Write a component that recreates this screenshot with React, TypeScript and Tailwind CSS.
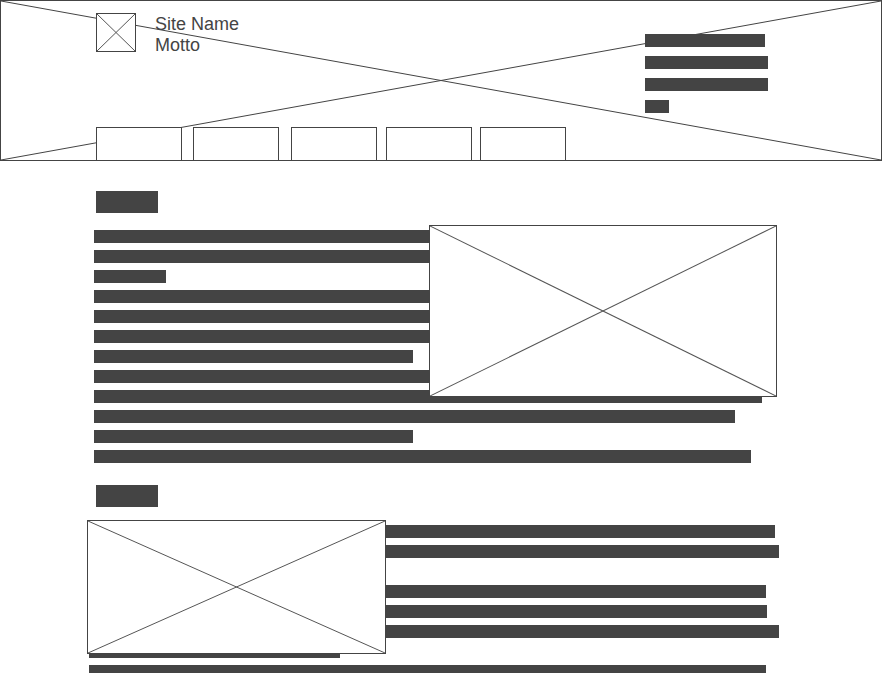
import React from "react";

function Cross({ color = "#555555" }: { color?: string }) {
  return (
    <svg className="absolute inset-0 h-full w-full" preserveAspectRatio="none" viewBox="0 0 100 100">
      <line x1="0" y1="0" x2="100" y2="100" stroke={color} strokeWidth="1" vectorEffect="non-scaling-stroke" />
      <line x1="0" y1="100" x2="100" y2="0" stroke={color} strokeWidth="1" vectorEffect="non-scaling-stroke" />
    </svg>
  );
}

// image placeholder box with an X; position class is passed in by the caller
function Placeholder({ className }: { className: string }) {
  return (
    <div className={`box-border border border-[#444444] bg-white ${className}`}>
      <Cross />
    </div>
  );
}

function Bar({ className }: { className: string }) {
  return <div className={`h-[13px] shrink-0 bg-[#444444] ${className}`} />;
}

function Header() {
  return (
    <header className="relative box-border flex h-[161px] w-[882px] flex-col border border-[#444444]">
      <Cross color="#444444" />
      <div className="relative flex pl-[95px] pt-[12px]">
        <div className="flex w-[549px] items-start">
          <Placeholder className="relative h-[39px] w-[40px]" />
          <div className="mt-[1px] ml-[19px] text-[18px] leading-[21px] text-[#444444] [font-family:'Liberation_Sans',Arial,sans-serif]">
            <div>Site Name</div>
            <div>Motto</div>
          </div>
        </div>
        <div className="mt-[21px] flex flex-col gap-[9px]">
          <Bar className="w-[120px]" />
          <Bar className="w-[123px]" />
          <Bar className="w-[123px]" />
          <Bar className="w-[24px]" />
        </div>
      </div>
      <nav className="relative mt-auto flex pl-[95px]">
        <div className="box-border h-[33px] w-[86px] border-x border-t border-[#444444] bg-white" />
        <div className="ml-[11px] box-border h-[33px] w-[86px] border-x border-t border-[#444444] bg-white" />
        <div className="ml-[12px] box-border h-[33px] w-[86px] border-x border-t border-[#444444] bg-white" />
        <div className="ml-[9px] box-border h-[33px] w-[86px] border-x border-t border-[#444444] bg-white" />
        <div className="ml-[8px] box-border h-[33px] w-[86px] border-x border-t border-[#444444] bg-white" />
      </nav>
    </header>
  );
}

function SectionOne() {
  return (
    <section className="mt-[30px] ml-[94px]">
      <div className="ml-[2px] h-[22px] w-[62px] bg-[#444444]" />
      <div className="relative mt-[17px] flex flex-col gap-[7px]">
        <Bar className="w-[620px]" />
        <Bar className="w-[640px]" />
        <Bar className="w-[72px]" />
        <Bar className="w-[610px]" />
        <Bar className="w-[630px]" />
        <Bar className="w-[600px]" />
        <Bar className="w-[319px]" />
        <Bar className="w-[650px]" />
        <Bar className="w-[668px]" />
        <Bar className="w-[641px]" />
        <Bar className="w-[319px]" />
        <Bar className="w-[657px]" />
        <Placeholder className="absolute top-[-5px] left-[335px] h-[172px] w-[348px]" />
      </div>
    </section>
  );
}

function SectionTwo() {
  return (
    <section className="mt-[22px] ml-[89px] pb-[17px]">
      <div className="ml-[7px] h-[22px] w-[62px] bg-[#444444]" />
      <div className="relative mt-[18px] flex flex-col gap-[7px]">
        <Bar className="w-[686px]" />
        <Bar className="w-[690px]" />
        <div className="h-[13px]" />
        <Bar className="w-[677px]" />
        <Bar className="w-[678px]" />
        <Bar className="w-[690px]" />
        <Bar className="w-[251px]" />
        <div className="h-[8px] w-[677px] bg-[#444444]" />
        <Placeholder className="absolute top-[-5px] left-[-2px] h-[134px] w-[299px]" />
      </div>
    </section>
  );
}

export default function App() {
  return (
    <div className="min-h-[690px] w-[884px] bg-white">
      <Header />
      <SectionOne />
      <SectionTwo />
    </div>
  );
}
